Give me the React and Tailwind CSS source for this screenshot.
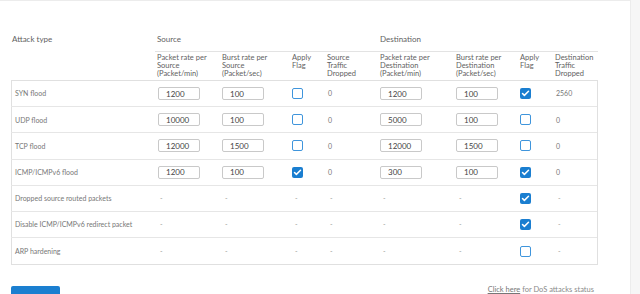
import { Check } from "lucide-react";

const cols = "grid-cols-[146px_65px_70px_35px_53px_76px_64px_35px_43px]";

const rows = [
  { name: "SYN flood", sr: "1200", sb: "100", sf: false, sd: "0", dr: "1200", db: "100", df: true, dd: "2560" },
  { name: "UDP flood", sr: "10000", sb: "100", sf: false, sd: "0", dr: "5000", db: "100", df: false, dd: "0" },
  { name: "TCP flood", sr: "12000", sb: "1500", sf: false, sd: "0", dr: "12000", db: "1500", df: false, dd: "0" },
  { name: "ICMP/ICMPv6 flood", sr: "1200", sb: "100", sf: true, sd: "0", dr: "300", db: "100", df: true, dd: "0" },
  { name: "Dropped source routed packets", df: true },
  { name: "Disable ICMP/ICMPv6 redirect packet", df: true },
  { name: "ARP hardening", df: false },
];

const Box = ({ checked }) =>
  checked ? (
    <span className="w-[11px] h-[11px] rounded-[2px] bg-[#1a7ed0] flex items-center justify-center">
      <Check size={9} strokeWidth={4} className="text-white" />
    </span>
  ) : (
    <span className="block w-[11px] h-[11px] rounded-[2px] border-[1.5px] border-[#3f95dc] bg-white" />
  );

const Field = ({ value }) => (
  <div className="w-[42px] h-[13px] border border-[#c9c9c9] rounded-[2px] pl-[7px] flex items-center text-[8px] text-[#444]">
    {value}
  </div>
);

const Dash = () => <span className="pl-[3px] text-[#999]">-</span>;

export default function App() {
  return (
    <div className="flex w-[640px] h-[294px] overflow-hidden bg-white" style={{ fontFamily: "Lato, 'Liberation Sans', sans-serif" }}>
      <div className="w-[631px] shrink-0 border-t border-r border-[#ececec] pt-[32px] px-[11px]">
        <div className={`grid ${cols} text-[8px] text-[#5f5f5f]`}>
          <div className="pl-[1px] h-[19px]">Attack type</div>
          <div className="col-span-4 border-b border-[#e3e3e3] -ml-[2px] pl-[2px]">Source</div>
          <div className="col-span-4 border-b border-[#e3e3e3]">Destination</div>
        </div>
        <div className={`grid ${cols} text-[7.5px] leading-[8px] text-[#5f5f5f] h-[28px] pt-[2px]`}>
          <div />
          <div>Packet rate per<br />Source<br />(Packet/min)</div>
          <div>Burst rate per<br />Source<br />(Packet/sec)</div>
          <div>Apply<br />Flag</div>
          <div>Source<br />Traffic<br />Dropped</div>
          <div>Packet rate per<br />Destination<br />(Packet/min)</div>
          <div>Burst rate per<br />Destination<br />(Packet/sec)</div>
          <div>Apply<br />Flag</div>
          <div>Destination<br />Traffic<br />Dropped</div>
        </div>
        <div className="w-[587px] border border-[#e0e0e0]">
          {rows.map((r, i) => (
            <div
              key={r.name}
              className={`grid ${cols} -ml-px h-[26.2px] items-center text-[7px] text-[#777] ${i < rows.length - 1 ? "border-b border-[#e6e6e6]" : ""}`}
            >
              <div className="pl-[4px]">{r.name}</div>
              {r.sr ? (
                <>
                  <div className="pl-[1px]"><Field value={r.sr} /></div>
                  <div><Field value={r.sb} /></div>
                  <div><Box checked={r.sf} /></div>
                  <div className="pl-[1px]">{r.sd}</div>
                  <div><Field value={r.dr} /></div>
                  <div><Field value={r.db} /></div>
                  <div><Box checked={r.df} /></div>
                  <div className="pl-[1px]">{r.dd}</div>
                </>
              ) : (
                <>
                  <div><Dash /></div>
                  <div><Dash /></div>
                  <div><Dash /></div>
                  <div><Dash /></div>
                  <div><Dash /></div>
                  <div><Dash /></div>
                  <div><Box checked={r.df} /></div>
                  <div><Dash /></div>
                </>
              )}
            </div>
          ))}
        </div>
        <div className="flex justify-between items-start w-[587px] mt-[21px]">
          <button className="w-[49px] h-[22px] rounded-[2px] bg-[#1b7fd0] text-white text-[8px] font-bold pt-[2px] border-0">
            Apply
          </button>
          <div className="text-[7.5px] leading-[9px] text-[#8a8a8a] pr-[4px] -mt-[1px]">
            <span className="underline text-[#777]">Click here</span> for DoS attacks status
          </div>
        </div>
      </div>
      <div className="flex-1 bg-[#f6f6f6]" />
    </div>
  );
}
